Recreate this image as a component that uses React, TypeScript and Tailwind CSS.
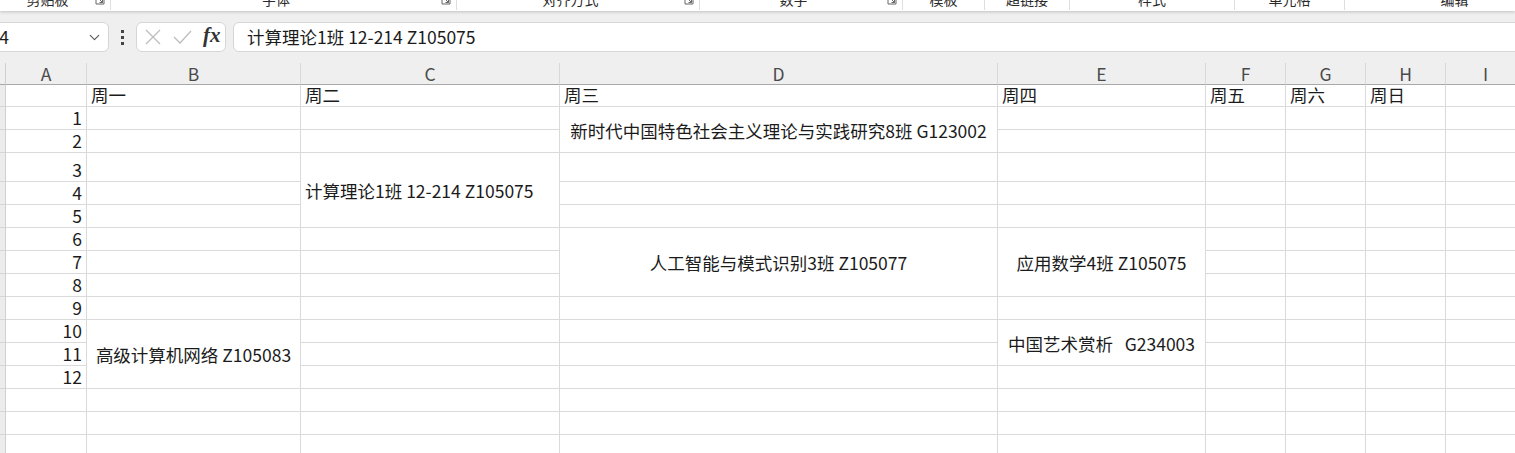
import clsx from "clsx";
import { ChevronDown } from "lucide-react";

type Cell = null | string | { t: string; span: 2 | 3; align: "center" | "left"; pre?: boolean };

const cols = ["A", "B", "C", "D", "E", "F", "G", "H", "I"];

const ribbon = [
  { label: "剪贴板", w: "w-[111px]", launcher: true },
  { label: "字体", w: "w-[346px]", launcher: true },
  { label: "对齐方式", w: "w-[243px]", launcher: true },
  { label: "数字", w: "w-[203px]", launcher: true },
  { label: "模板", w: "w-[82px]", launcher: false },
  { label: "超链接", w: "w-[85px]", launcher: false },
  { label: "样式", w: "w-[165px]", launcher: false },
  { label: "单元格", w: "w-[110px]", launcher: false },
  { label: "编辑", w: "w-[220px]", launcher: false },
];

const e = "";
// one entry per visible cell, columns A..I; null = covered by a merge above
const rows: Cell[][] = [
  [e, "周一", "周二", "周三", "周四", "周五", "周六", "周日", e],
  ["1", e, e, { t: "新时代中国特色社会主义理论与实践研究8班 G123002", span: 2, align: "center" }, e, e, e, e, e],
  ["2", e, e, null, e, e, e, e, e],
  ["3", e, { t: "计算理论1班 12-214 Z105075", span: 3, align: "left" }, e, e, e, e, e, e],
  ["4", e, null, e, e, e, e, e, e],
  ["5", e, null, e, e, e, e, e, e],
  [
    "6",
    e,
    e,
    { t: "人工智能与模式识别3班 Z105077", span: 3, align: "center" },
    { t: "应用数学4班 Z105075", span: 3, align: "center" },
    e,
    e,
    e,
    e,
  ],
  ["7", e, e, null, null, e, e, e, e],
  ["8", e, e, null, null, e, e, e, e],
  ["9", e, e, e, e, e, e, e, e],
  [
    "10",
    { t: "高级计算机网络 Z105083", span: 3, align: "center" },
    e,
    e,
    { t: "中国艺术赏析   G234003", span: 2, align: "center", pre: true },
    e,
    e,
    e,
    e,
  ],
  ["11", null, e, e, null, e, e, e, e],
  ["12", null, e, e, e, e, e, e, e],
  [e, e, e, e, e, e, e, e, e],
  [e, e, e, e, e, e, e, e, e],
  [e, e, e, e, e, e, e, e, e],
];

const Launcher = () => (
  <svg width="10" height="10" viewBox="0 0 10 10" className="mt-[-5px] mr-[5px] shrink-0">
    <path d="M1 1h8v8H1z" fill="none" stroke="#666" strokeWidth="1" />
    <path d="M3.5 3.5l4 4M7.5 4.5v3h-3" fill="none" stroke="#666" strokeWidth="1" />
  </svg>
);

const DataCell = ({ cell, col }: { cell: Exclude<Cell, null>; col: number }) => {
  if (typeof cell === "string") {
    if (col === 0) {
      return (
        <div className="flex items-end justify-end pr-[4px] border-r border-b border-[#dadada] bg-white">
          {cell}
        </div>
      );
    }
    return (
      <div className="flex items-end pl-[4px] border-r border-b border-[#dadada] bg-white whitespace-nowrap overflow-hidden">
        {cell}
      </div>
    );
  }
  return (
    <div
      className={clsx(
        "flex items-center pt-[2px] border-r border-b border-[#dadada] bg-white whitespace-nowrap overflow-hidden",
        cell.span === 2 ? "row-span-2" : "row-span-3",
        cell.align === "center" ? "justify-center" : "justify-start pl-[4px]",
        cell.pre && "whitespace-pre"
      )}
    >
      {cell.t}
    </div>
  );
};

const App = () => {
  return (
    <div className="w-[1515px] h-[453px] overflow-hidden bg-[#efefef] text-[#1b1b1b] font-['Noto_Sans_CJK_SC',sans-serif]">
      {/* ribbon, scrolled so that only the group labels' bottoms show */}
      <div className="relative z-10 h-[11px] flex bg-white overflow-hidden shadow-[0_1px_3px_rgba(0,0,0,0.2)]">
        {ribbon.map((g) => (
          <div key={g.label} className={clsx("shrink-0 h-[10px] flex items-start border-r border-[#dedede]", g.w)}>
            <span className="flex-1 text-center text-[14px] leading-[14px] mt-[-8px] text-[#2a2a2a]">{g.label}</span>
            {g.launcher && <Launcher />}
          </div>
        ))}
      </div>

      {/* formula bar */}
      <div className="h-[52px] pt-[11px] flex items-start text-[17.5px] leading-none">
        <div className="ml-[-25px] w-[134px] h-[30px] shrink-0 flex items-center pl-[12px] pr-[5px] bg-white border border-[#d6d6d6] rounded-[6px]">
          <span>C4</span>
          <ChevronDown size={17} strokeWidth={1.6} className="ml-auto text-[#555]" />
        </div>
        <div className="ml-[7px] w-[13px] h-[30px] shrink-0 flex flex-col items-center justify-center gap-[3px]">
          <div className="w-[3px] h-[3px] bg-[#444]" />
          <div className="w-[3px] h-[3px] bg-[#444]" />
          <div className="w-[3px] h-[3px] bg-[#444]" />
        </div>
        <div className="ml-[7px] w-[90px] h-[30px] shrink-0 flex items-center gap-[11px] pl-[7px] bg-white border border-[#d6d6d6] rounded-[6px]">
          <svg width="18" height="18" viewBox="0 0 18 18">
            <path d="M2 2l14 14M16 2L2 16" stroke="#bdbdbd" strokeWidth="1.3" fill="none" />
          </svg>
          <svg width="19" height="18" viewBox="0 0 19 18">
            <path d="M1 9l6 6L18 3" stroke="#bdbdbd" strokeWidth="1.3" fill="none" />
          </svg>
          <span className="font-['Liberation_Serif',serif] italic font-bold text-[21px] text-[#333] leading-none -mt-[3px]">
            fx
          </span>
        </div>
        <div className="ml-[7px] flex-1 mr-[-10px] h-[30px] flex items-center pl-[13px] bg-white border border-[#d6d6d6] rounded-[6px]">
          计算理论1班 12-214 Z105075
        </div>
      </div>

      {/* sheet */}
      <div className="grid grid-cols-[6px_81px_214px_259px_438px_208px_80px_80px_80px_80px] grid-rows-[22px_22px_23px_23px_29px_repeat(12,23px)] text-[17.5px] leading-[22px]">
        <div className="bg-[#efefef] border-r border-b border-r-[#cfcfcf] border-b-[#a8a8a8]" />
        {cols.map((c) => (
          <div
            key={c}
            className="flex items-center justify-center bg-[#efefef] border-r border-b border-r-[#d8d8d8] border-b-[#a8a8a8] text-[#4a4a4a]"
          >
            {c}
          </div>
        ))}
        {rows.map((r, ri) => (
          <div key={ri} className="contents">
            <div className="bg-[#ececec] border-r border-b border-r-[#cfcfcf] border-b-[#d6d6d6]" />
            {r.map((cell, ci) => (cell === null ? null : <DataCell key={ci} cell={cell} col={ci} />))}
          </div>
        ))}
      </div>
    </div>
  );
};

export default App;
